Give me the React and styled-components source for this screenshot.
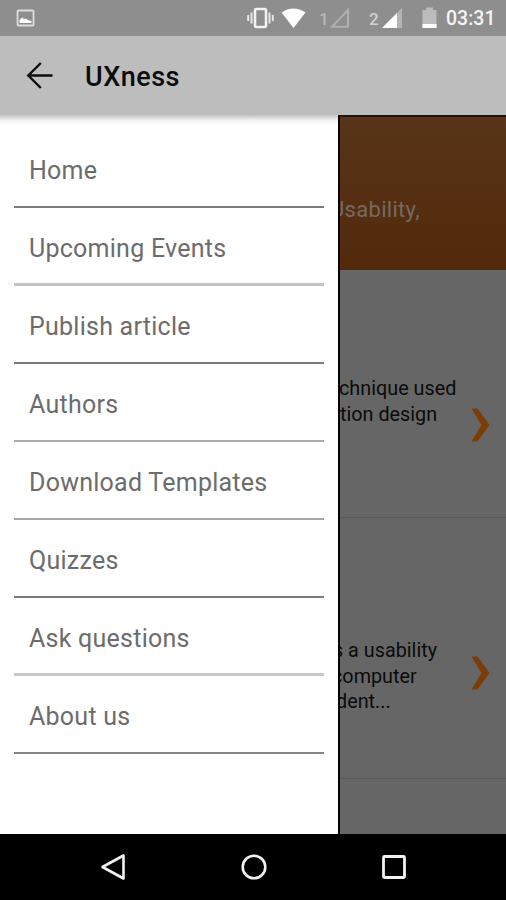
import React from 'react';
import styled, { createGlobalStyle } from 'styled-components';

// -------------- DATA -----------------

const menuItems = [
    { label: 'Home', line: '#7c7c7c' },
    { label: 'Upcoming Events', line: '#c4c4c4', thick: true },
    { label: 'Publish article', line: '#7c7c7c' },
    { label: 'Authors', line: '#ababab' },
    { label: 'Download Templates', line: '#a6a6a6' },
    { label: 'Quizzes', line: '#7c7c7c' },
    { label: 'Ask questions', line: '#c8c8c8', thick: true },
    { label: 'About us', line: '#858585' }
];

// -------------- CSS -----------------

const GlobalStyle = createGlobalStyle`
    * {
        box-sizing: border-box;
    }

    body {
        margin: 0;
        font-family: Roboto, "Liberation Sans", sans-serif;
    }
`;

const Screen = styled.div`
    width: 506px;
    height: 900px;
    display: flex;
    flex-direction: column;
    overflow: hidden;
    background: #fff;
`;

const StatusBar = styled.div`
    height: 36px;
    flex: none;
    padding: 0 10px 0 16px;
    display: flex;
    align-items: center;
    justify-content: space-between;
    background: #8e8e8e;
`;

const StatusIcons = styled.div`
    display: flex;
    align-items: center;
`;

const SimNumber = styled.span`
    width: 10px;
    margin-left: ${props => props.$gap}px;
    color: ${props => props.$color};
    font-size: 17px;
    font-weight: 500;
    line-height: 36px;
    padding-top: 2px;
`;

const Clock = styled.span`
    width: 50px;
    margin-left: 9px;
    color: #f4f4f4;
    font-size: 19.5px;
    font-weight: 500;
    line-height: 36px;
    padding-top: 2px;
    white-space: nowrap;
`;

const AppBar = styled.header`
    height: 79px;
    flex: none;
    padding-left: 26px;
    display: flex;
    align-items: center;
    gap: 31px;
    background: #bdbdbd;
`;

const Title = styled.h1`
    margin: 3px 0 0;
    color: #0c0c0c;
    font-size: 27px;
    font-weight: 500;
    line-height: 32px;
    letter-spacing: .5px;
`;

const Body = styled.div`
    height: 719px;
    flex: none;
    display: flex;
`;

const Drawer = styled.nav`
    width: 340px;
    flex: none;
    padding: 15px 14px 0;
    border-right: 2px solid #030303;
    background: linear-gradient(#c4c4c4, #f0f0f0 5px, #fff 10px);
`;

const MenuItem = styled.a`
    height: 78px;
    padding: ${props => props.$thick ? 5 : 4}px 14px 0 15px;
    display: flex;
    align-items: center;
    color: #6c6c6c;
    font-size: 25px;
    letter-spacing: .25px;
    border-bottom: ${props => props.$thick ? 3 : 2}px solid ${props => props.$line};
`;

const Page = styled.main`
    flex: 1;
    overflow: hidden;
    background: #666;
`;

const Banner = styled.div`
    height: 155px;
    padding-top: 80px;
    border-top: 2px solid #350c04;
    background: linear-gradient(#583518, #53290b);
    color: #746a63;
    font-size: 22px;
    line-height: 26px;
    letter-spacing: .3px;
`;

const Article = styled.article`
    height: ${props => props.$height}px;
    padding: ${props => props.$top}px 15px 0 0;
    display: flex;
    justify-content: space-between;
    border-bottom: 1px solid #5a5a5a;
    color: #0b0b0b;
    font-size: 19.8px;
    line-height: 25.5px;
`;

// the drawer covers the start of each line
const Line = styled.div`
    margin-left: ${props => -props.$cut}px;
    white-space: nowrap;
`;

const Arrow = styled.svg`
    flex: none;
    margin-top: ${props => props.$top}px;
`;

const NavBar = styled.footer`
    flex: 1;
    padding: 0 98px 0 100px;
    display: flex;
    align-items: center;
    justify-content: space-between;
    background: #000;
`;

// -------------- COMPONENTS -----------------

function Chevron(props) {
    return (
        <Arrow $top={props.top} width="20" height="34" viewBox="0 0 20 34">
            <path d="M0.500 0.500H6.500L18.500 17L6.500 33.500H0.500L10.500 17Z" fill="#7c3c06" />
        </Arrow>
    );
}

function Status() {
    return (
        <StatusBar>
            <svg width="20" height="20" viewBox="0 0 20 20">
                <rect x="1.5" y="2.5" width="16" height="15" rx="1" fill="none" stroke="#dcdcdc" strokeWidth="1.8" />
                <path d="M3.500 15V12L6 9.500L8 11L10 10.500L12 12L15.500 13V15Z" fill="#fff" />
            </svg>
            <StatusIcons>
                <svg width="27" height="22" viewBox="0 0 27 22">
                    <rect x="8" y="2" width="11" height="18" rx="1.5" fill="none" stroke="#f2f2f2" strokeWidth="2.6" />
                    <path d="M4.5 5.5V16.5M22.5 5.5V16.5M1.2 8V14M25.8 8V14" stroke="#e6e6e6" strokeWidth="2" />
                </svg>
                <svg width="26" height="22" viewBox="0 0 26 22" style={{ marginLeft: 7 }}>
                    <path d="M0.5 5.5Q12.5 -2.5 24.5 5.5L12.5 21Z" fill="#fff" />
                </svg>
                <SimNumber $gap={12} $color="#b9b9b9">1</SimNumber>
                <svg width="21" height="22" viewBox="0 0 21 22">
                    <path d="M3 19.8H19V3Z" fill="none" stroke="#b0b0b0" strokeWidth="2" />
                </svg>
                <SimNumber $gap={19} $color="#d0d0d0">2</SimNumber>
                <svg width="24" height="22" viewBox="0 0 24 22">
                    <path d="M3 21H23V1Z" fill="#b4b4b4" />
                    <path d="M3 21H18V6Z" fill="#fff" />
                </svg>
                <svg width="15" height="22" viewBox="0 0 15 22" style={{ marginLeft: 19 }}>
                    <path d="M0.5 3H4V0.5H11V3H14.5V21H0.5Z" fill="#bcbcbc" />
                    <path d="M0.5 17H14.5V21H0.5Z" fill="#fff" />
                </svg>
                <Clock>03:31</Clock>
            </StatusIcons>
        </StatusBar>
    );
}

export default function App() {
    const items = menuItems.map(item => (
        <MenuItem key={item.label} $line={item.line} $thick={item.thick}>{item.label}</MenuItem>
    ));

    return (
        <Screen>
            <GlobalStyle />
            <Status />
            <AppBar>
                <svg width="28" height="28" viewBox="0 0 28 28">
                    <path d="M26.5 13.500H2.5M14.8 1L2.3 13.500L14.8 26" fill="none" stroke="#0c0c0c" strokeWidth="2.4" />
                </svg>
                <Title>UXness</Title>
            </AppBar>
            <Body>
                <Drawer>{items}</Drawer>
                <Page>
                    <Banner>
                        <Line $cut={10}>Usability,</Line>
                    </Banner>
                    <Article $height={248} $top={106}>
                        <div>
                            <Line $cut={1}>chnique used</Line>
                            <Line $cut={0}>tion design</Line>
                        </div>
                        <Chevron top={32} />
                    </Article>
                    <Article $height={261} $top={120}>
                        <div>
                            <Line $cut={7}>s a usability</Line>
                            <Line $cut={8}>computer</Line>
                            <Line $cut={4}>dent...</Line>
                        </div>
                        <Chevron top={18} />
                    </Article>
                </Page>
            </Body>
            <NavBar>
                <svg width="27" height="28" viewBox="0 0 27 28">
                    <path d="M2.5 14L23.5 2.5V25.5Z" fill="none" stroke="#f2f2f2" strokeWidth="2.6" strokeLinejoin="round" />
                </svg>
                <svg width="28" height="28" viewBox="0 0 28 28">
                    <circle cx="14" cy="14" r="11.3" fill="none" stroke="#f2f2f2" strokeWidth="2.6" />
                </svg>
                <svg width="28" height="28" viewBox="0 0 28 28">
                    <rect x="3.5" y="3.5" width="21" height="21" rx="1" fill="none" stroke="#f2f2f2" strokeWidth="2.8" />
                </svg>
            </NavBar>
        </Screen>
    );
}
